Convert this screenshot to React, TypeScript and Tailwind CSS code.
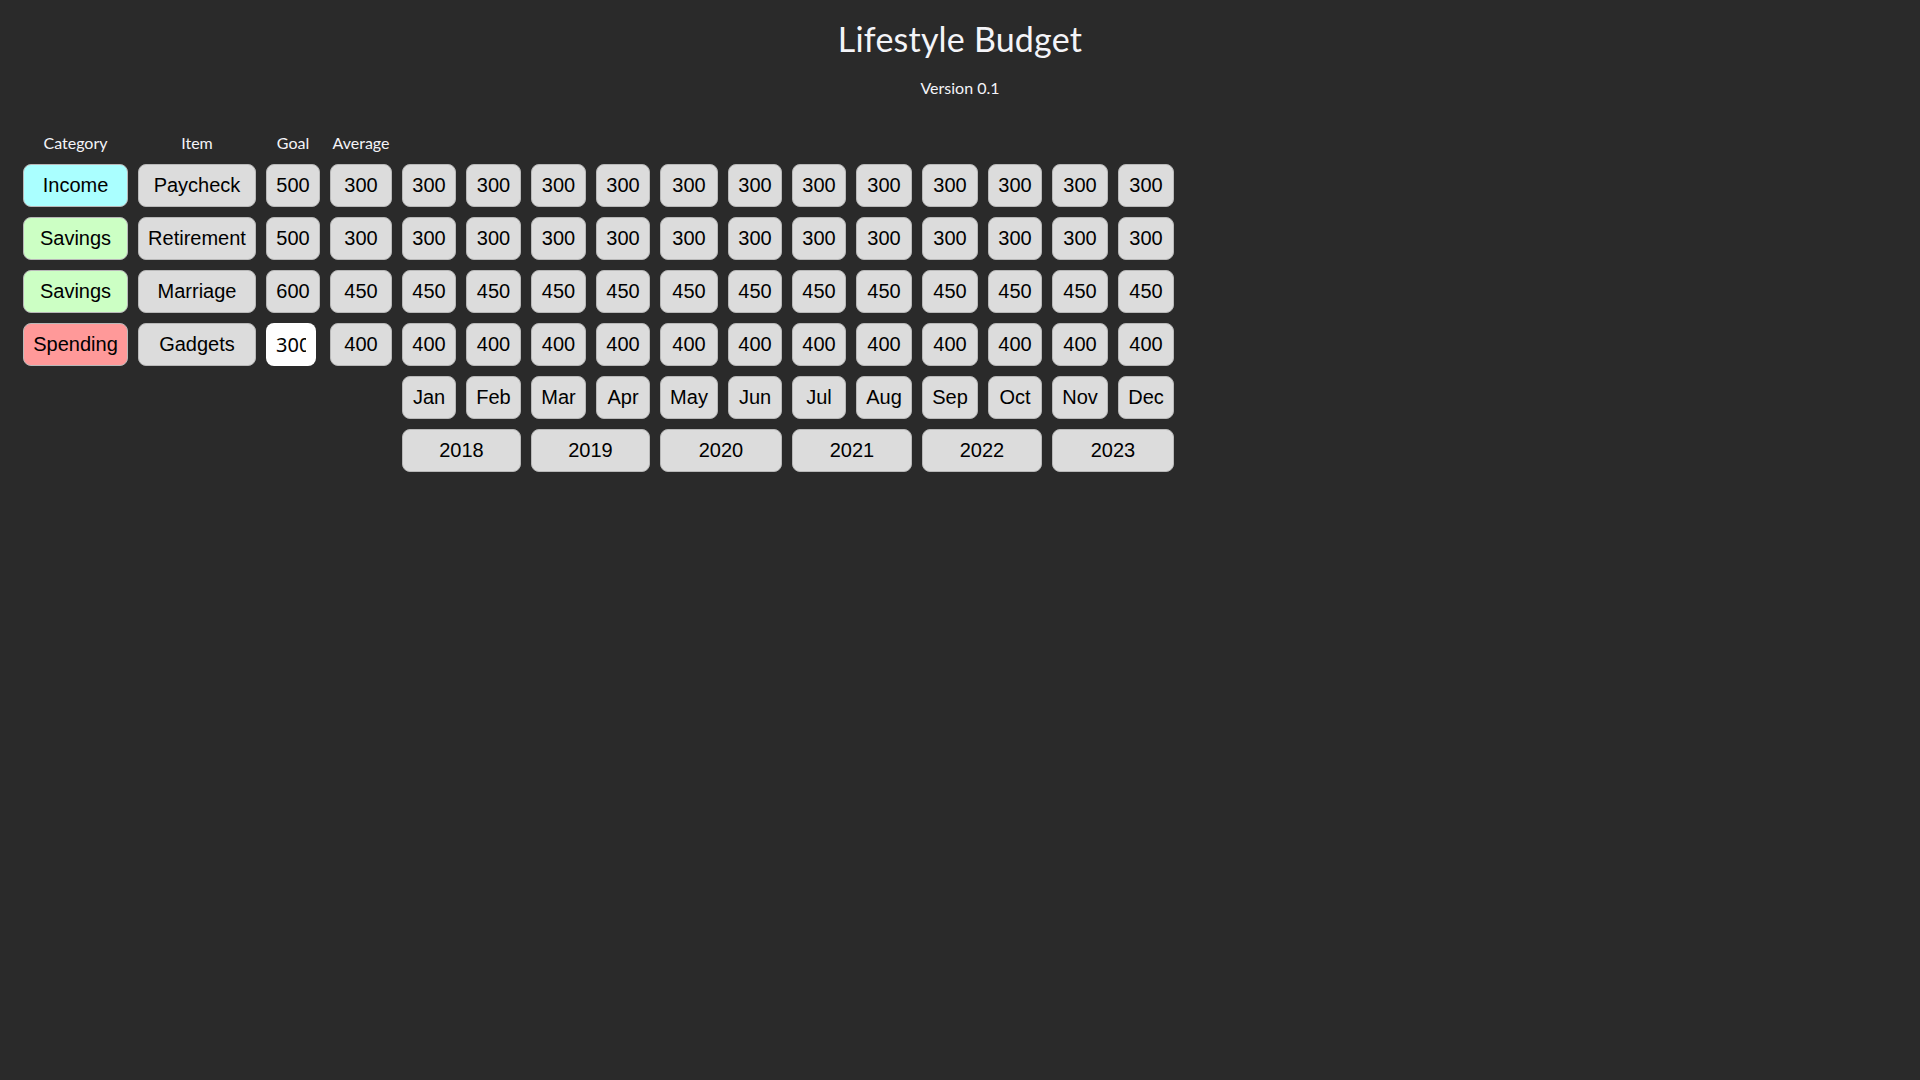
import React from "react";

const months = ["Jan", "Feb", "Mar", "Apr", "May", "Jun", "Jul", "Aug", "Sep", "Oct", "Nov", "Dec"];
const years = ["2018", "2019", "2020", "2021", "2022", "2023"];

type Row = { cat: string; catClass: string; item: string; goal: string; avg: string; vals: string; input?: boolean };

const rows: Row[] = [
  { cat: "Income", catClass: "bg-[#aaffff]", item: "Paycheck", goal: "500", avg: "300", vals: "300" },
  { cat: "Savings", catClass: "bg-[#ccffc4]", item: "Retirement", goal: "500", avg: "300", vals: "300" },
  { cat: "Savings", catClass: "bg-[#ccffc4]", item: "Marriage", goal: "600", avg: "450", vals: "450" },
  { cat: "Spending", catClass: "bg-[#ff9999]", item: "Gadgets", goal: "300", avg: "400", vals: "400", input: true },
];

const cell =
  "h-[43px] flex items-center justify-center rounded-[8px] text-[20px] leading-[23px] text-black whitespace-nowrap border border-[#b8b8b8]";

function Cell({ children, className = "" }: { children: React.ReactNode; className?: string }) {
  return <div className={`${cell} ${className}`}>{children}</div>;
}

export default function App() {
  return (
    <div
      className="min-h-screen w-full bg-[#2a2a2a] text-white"
      style={{ fontFamily: "'Liberation Sans', Arial, sans-serif" }}
    >
      <header className="flex flex-col items-center pt-[17px] font-['Lato',sans-serif]">
        <h1 className="text-[34px] leading-[44px] font-normal text-[#f4f4f8] tracking-[0.2px]">Lifestyle Budget</h1>
        <p className="mt-[17px] text-[16px] leading-[20px] text-[#f4f4f8]">Version 0.1</p>
      </header>

      <div className="mt-[35px] pl-[23px] grid grid-cols-[105px_118px_54px_62px_54px_55px_55px_54px_58px_54px_54px_56px_56px_54px_56px_56px] gap-[10px] w-max">
        {/* Header row */}
        {["Category", "Item", "Goal", "Average"].map((h) => (
          <div
            key={h}
            className="text-center text-[16px] leading-[19px] pb-[2px] text-[#f4f4f8] font-['Lato',sans-serif] self-end"
          >
            {h}
          </div>
        ))}
        <div className="col-span-12" />

        {rows.map((r, i) => (
          <React.Fragment key={i}>
            <Cell className={`${r.catClass} px-[10px]`}>{r.cat}</Cell>
            <Cell className="bg-[#dcdcdc] px-[10px]">{r.item}</Cell>
            {r.input ? (
              <div className="flex">
                <input
                  readOnly
                  value={r.goal}
                  className="w-[50px] h-[43px] rounded-[8px] bg-white text-black text-[20px] pl-[10px] pr-[10px] outline-none border-0 font-['Noto_Sans',sans-serif]"
                />
              </div>
            ) : (
              <Cell className="bg-[#dcdcdc]">{r.goal}</Cell>
            )}
            <Cell className="bg-[#dcdcdc]">{r.avg}</Cell>
            {months.map((m) => (
              <Cell key={m} className="bg-[#dcdcdc]">
                {r.vals}
              </Cell>
            ))}
          </React.Fragment>
        ))}

        {/* Month labels */}
        <div className="col-span-4" />
        {months.map((m) => (
          <Cell key={m} className="bg-[#dcdcdc]">
            {m}
          </Cell>
        ))}

        {/* Year labels */}
        <div className="col-span-4" />
        {years.map((y) => (
          <Cell key={y} className="bg-[#dcdcdc] col-span-2">
            {y}
          </Cell>
        ))}
      </div>
    </div>
  );
}
